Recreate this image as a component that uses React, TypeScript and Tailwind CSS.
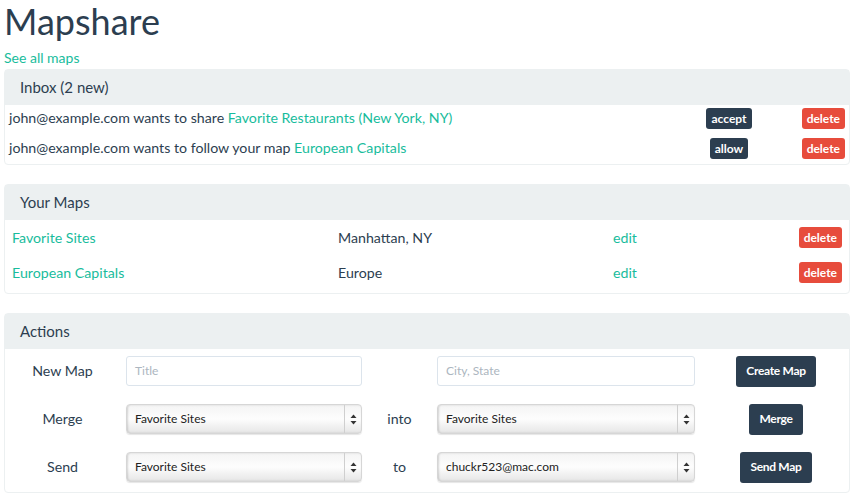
function Btn({ label, kind }: { label: string; kind: "dark" | "red" }) {
  return (
    <span
      className={
        kind === "dark"
          ? "inline-block rounded-[3px] bg-[#2c3e50] px-[5px] py-[2px] text-[12px] font-bold leading-[17px] text-white"
          : "inline-block rounded-[3px] bg-[#e74c3c] px-[5px] py-[2px] text-[12px] font-bold leading-[17px] text-white"
      }
    >
      {label}
    </span>
  );
}

function Arrows() {
  return (
    <svg width="7" height="11" viewBox="0 0 7 11">
      <path d="M3.5 0.5 L6.5 4 L0.5 4 Z" fill="#333" />
      <path d="M3.5 10.5 L6.5 7 L0.5 7 Z" fill="#333" />
    </svg>
  );
}

function FakeSelect({ value, w }: { value: string; w: string }) {
  return (
    <div
      className={`${w} flex h-[30px] items-center rounded-[4px] border border-[#d6d6d6] bg-gradient-to-b from-[#f4f4f4] via-[#fdfdfd] to-[#e6e6e6] shadow-[inset_1px_0_2px_rgba(0,0,0,0.15),0_1px_1px_rgba(0,0,0,0.1)]`}
    >
      <span className="flex-1 pl-[8px] text-[12px] text-[#222]">{value}</span>
      <span className="flex h-full w-[17px] items-center justify-center border-l border-[#cfcfcf]">
        <Arrows />
      </span>
    </div>
  );
}

function ActionBtn({ label }: { label: string }) {
  return (
    <span className="flex flex-1 justify-center pl-[8px]">
      <span className="flex h-[31px] items-center rounded-[3px] bg-[#2c3e50] px-[10px] text-[12px] font-bold tracking-[-0.3px] text-white">
        {label}
      </span>
    </span>
  );
}

export default function App() {
  return (
    <div className="min-h-[499px] bg-white px-[4px] font-['Lato','Open_Sans',sans-serif] text-[14.2px] text-[#2c3e50]">
      <h1 className="text-[36px] leading-[42px]">Mapshare</h1>
      <a className="mt-[6px] block text-[14px] leading-[20px] text-[#18bc9c]">See all maps</a>

      {/* inbox */}
      <div className="mt-[1px] w-[846px] rounded-[4px] border border-[#ecf0f1]">
        <div className="flex h-[35px] items-center bg-[#ecf0f1] px-[15px] text-[15px]">Inbox (2 new)</div>
        <div className="px-[4px] pb-[3px]">
          <div className="flex h-[26px] items-center">
            <span className="flex-1">
              john@example.com wants to share <a className="text-[#18bc9c]">Favorite Restaurants (New York, NY)</a>
            </span>
            <span className="w-[50px] text-center">
              <Btn label="accept" kind="dark" />
            </span>
            <span className="w-[46px]" />
            <span className="w-[45px] text-right">
              <Btn label="delete" kind="red" />
            </span>
          </div>
          <div className="mt-[4px] flex h-[26px] items-center">
            <span className="flex-1">
              john@example.com wants to follow your map <a className="text-[#18bc9c]">European Capitals</a>
            </span>
            <span className="w-[50px] text-center">
              <Btn label="allow" kind="dark" />
            </span>
            <span className="w-[46px]" />
            <span className="w-[45px] text-right">
              <Btn label="delete" kind="red" />
            </span>
          </div>
        </div>
      </div>

      {/* your maps */}
      <div className="mt-[19px] w-[846px] rounded-[4px] border border-[#ecf0f1]">
        <div className="flex h-[35px] items-center bg-[#ecf0f1] px-[15px] text-[15px]">Your Maps</div>
        <div className="px-[7px] pb-[3px]">
          {[
            ["Favorite Sites", "Manhattan, NY"],
            ["European Capitals", "Europe"],
          ].map(([name, place]) => (
            <div key={name} className="flex h-[35px] items-center">
              <a className="w-[326px] text-[#18bc9c]">{name}</a>
              <span className="w-[275px]">{place}</span>
              <a className="flex-1 text-[#18bc9c]">edit</a>
              <Btn label="delete" kind="red" />
            </div>
          ))}
        </div>
      </div>

      {/* actions */}
      <div className="mt-[19px] w-[846px] rounded-[4px] border border-[#ecf0f1]">
        <div className="flex h-[35px] items-center bg-[#ecf0f1] px-[15px] text-[15px]">Actions</div>
        <div className="pt-[7px] pb-[10px]">
          <div className="flex h-[30px] items-center">
            <span className="w-[115px] text-center">New Map</span>
            <div className="ml-[6px] flex h-[30px] w-[236px] items-center rounded-[3px] border border-[#dce4ec] px-[8px] text-[12px] text-[#acb6c0]">
              Title
            </div>
            <span className="w-[75px]" />
            <div className="flex h-[30px] w-[258px] items-center rounded-[3px] border border-[#dce4ec] px-[8px] text-[12px] text-[#acb6c0]">
              City, State
            </div>
            <ActionBtn label="Create Map" />
          </div>
          <div className="mt-[18px] flex h-[30px] items-center">
            <span className="w-[115px] text-center">Merge</span>
            <div className="ml-[6px]">
              <FakeSelect value="Favorite Sites" w="w-[236px]" />
            </div>
            <span className="w-[75px] text-center">into</span>
            <FakeSelect value="Favorite Sites" w="w-[258px]" />
            <ActionBtn label="Merge" />
          </div>
          <div className="mt-[18px] flex h-[30px] items-center">
            <span className="w-[115px] text-center">Send</span>
            <div className="ml-[6px]">
              <FakeSelect value="Favorite Sites" w="w-[236px]" />
            </div>
            <span className="w-[75px] text-center">to</span>
            <FakeSelect value="chuckr523@mac.com" w="w-[258px]" />
            <ActionBtn label="Send Map" />
          </div>
        </div>
      </div>
    </div>
  );
}
